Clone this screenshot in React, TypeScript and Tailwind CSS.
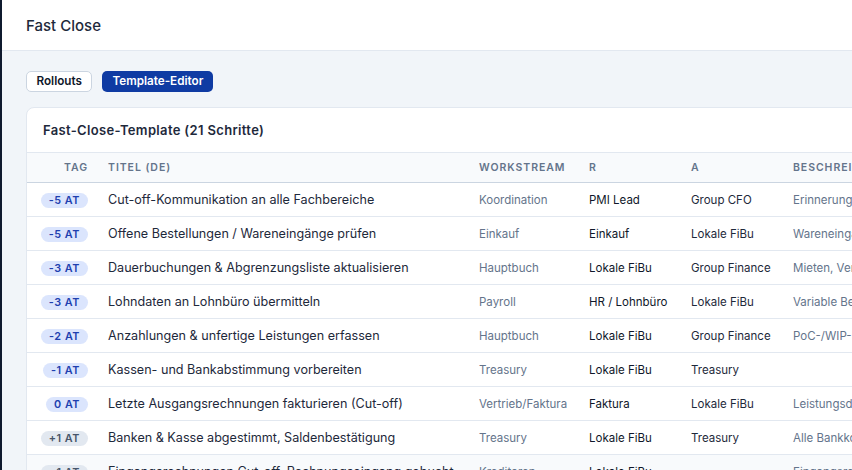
const rows = [
  { day: "-5 AT", tone: "blue", title: "Cut-off-Kommunikation an alle Fachbereiche", ws: "Koordination", r: "PMI Lead", a: "Group CFO", desc: "Erinnerung an alle Fachbereiche" },
  { day: "-5 AT", tone: "blue", title: "Offene Bestellungen / Wareneingänge prüfen", ws: "Einkauf", r: "Einkauf", a: "Lokale FiBu", desc: "Wareneingänge ohne Rechnung" },
  { day: "-3 AT", tone: "blue", title: "Dauerbuchungen & Abgrenzungsliste aktualisieren", ws: "Hauptbuch", r: "Lokale FiBu", a: "Group Finance", desc: "Mieten, Versicherungen, Leasing" },
  { day: "-3 AT", tone: "blue", title: "Lohndaten an Lohnbüro übermitteln", ws: "Payroll", r: "HR / Lohnbüro", a: "Lokale FiBu", desc: "Variable Bestandteile" },
  { day: "-2 AT", tone: "blue", title: "Anzahlungen & unfertige Leistungen erfassen", ws: "Hauptbuch", r: "Lokale FiBu", a: "Group Finance", desc: "PoC-/WIP-Bewertung" },
  { day: "-1 AT", tone: "blue", title: "Kassen- und Bankabstimmung vorbereiten", ws: "Treasury", r: "Lokale FiBu", a: "Treasury", desc: "" },
  { day: "0 AT", tone: "blue", title: "Letzte Ausgangsrechnungen fakturieren (Cut-off)", ws: "Vertrieb/Faktura", r: "Faktura", a: "Lokale FiBu", desc: "Leistungsdatum prüfen" },
  { day: "+1 AT", tone: "gray", title: "Banken & Kasse abgestimmt, Saldenbestätigung", ws: "Treasury", r: "Lokale FiBu", a: "Treasury", desc: "Alle Bankkonten abgestimmt" },
  { day: "+1 AT", tone: "gray", title: "Eingangsrechnungen Cut-off, Rechnungseingang gebucht", ws: "Kreditoren", r: "Lokale FiBu", a: "", desc: "Eingangsrechnungen" },
];

export default function App() {
  return (
    <div className="flex h-screen overflow-hidden bg-[#f1f5f9] font-['Inter',sans-serif] text-[#0f172a]">
      <div className="w-[2px] shrink-0 bg-[#0f1a2e]" />
      <div className="min-w-0 flex-1">
        <header className="flex h-[51px] items-center border-b border-[#e2e8f0] bg-white px-6 pt-[2px]">
          <h1 className="text-[15px] font-medium text-[#1e293b]">Fast Close</h1>
        </header>

        <div className="pl-6 pt-5">
          <div className="flex gap-[10px]">
            <button className="h-[21px] rounded-[5px] border border-[#cbd5e1] bg-white px-[9.5px] pt-[1px] text-[11.7px] font-semibold text-[#0f172a]">Rollouts</button>
            <button className="h-[21px] rounded-[5px] bg-[#0f3ba3] px-[10px] pt-[1px] text-[11.7px] font-semibold text-white">Template-Editor</button>
          </div>

          <div className="mt-[15px] w-[1000px] overflow-hidden rounded-t-[8px] border border-[#e2e8f0] bg-white">
            <div className="flex h-[45px] items-center border-b border-[#e2e8f0] px-4 pt-[1px]">
              <h2 className="text-[13px] font-semibold tracking-[0.34px] text-[#1e293b]">Fast-Close-Template (21 Schritte)</h2>
            </div>
            <table className="w-[1000px] table-fixed border-collapse whitespace-nowrap text-[12.6px]">
              <colgroup>
                <col className="w-[69px]" />
                <col className="w-[371px]" />
                <col className="w-[110px]" />
                <col className="w-[102px]" />
                <col className="w-[102px]" />
                <col />
              </colgroup>
              <thead>
                <tr className="h-[29px] border-b border-[#cbd5e1] bg-[#f8fafc] text-[10.5px] font-semibold tracking-[0.09em] text-[#64748b]">
                  <th className="pl-3 pr-[8px] pt-[2px] text-right font-semibold">TAG</th>
                  <th className="px-3 pt-[2px] text-left font-semibold">TITEL (DE)</th>
                  <th className="px-3 pt-[2px] text-left font-semibold">WORKSTREAM</th>
                  <th className="px-3 pt-[2px] text-left font-semibold">R</th>
                  <th className="px-3 pt-[2px] text-left font-semibold">A</th>
                  <th className="px-3 pt-[2px] text-left font-semibold">BESCHREIBUNG</th>
                </tr>
              </thead>
              <tbody>
                {rows.map((row, i) => (
                  <tr key={i} className={`h-[34px] border-b border-[#e2e8f0] ${i === 8 ? "bg-[#f8fafc]" : ""}`}>
                    <td className="pr-2 pt-[2px] text-right">
                      <span className={`inline-block rounded-full px-[8px] text-[10.8px] leading-[15px] font-semibold tracking-[0.05em] ${row.tone === "blue" ? "bg-[#dbe5fd] text-[#1e40af]" : "bg-[#e2e8f0] text-[#475569]"}`}>{row.day}</span>
                    </td>
                    <td className="px-3 pt-[2px] text-[#1e293b]">{row.title}</td>
                    <td className="pl-3 pt-[3px] text-[11.5px] text-[#64748b]">{row.ws}</td>
                    <td className="pl-3 pt-[3px] text-[11.5px] text-[#0f172a]">{row.r}</td>
                    <td className="pl-3 pt-[3px] text-[11.5px] text-[#1e293b]">{row.a}</td>
                    <td className="pl-3 pt-[3px] text-[11.5px] text-[#64748b]">{row.desc}</td>
                  </tr>
                ))}
              </tbody>
            </table>
          </div>
        </div>
      </div>
    </div>
  );
}
